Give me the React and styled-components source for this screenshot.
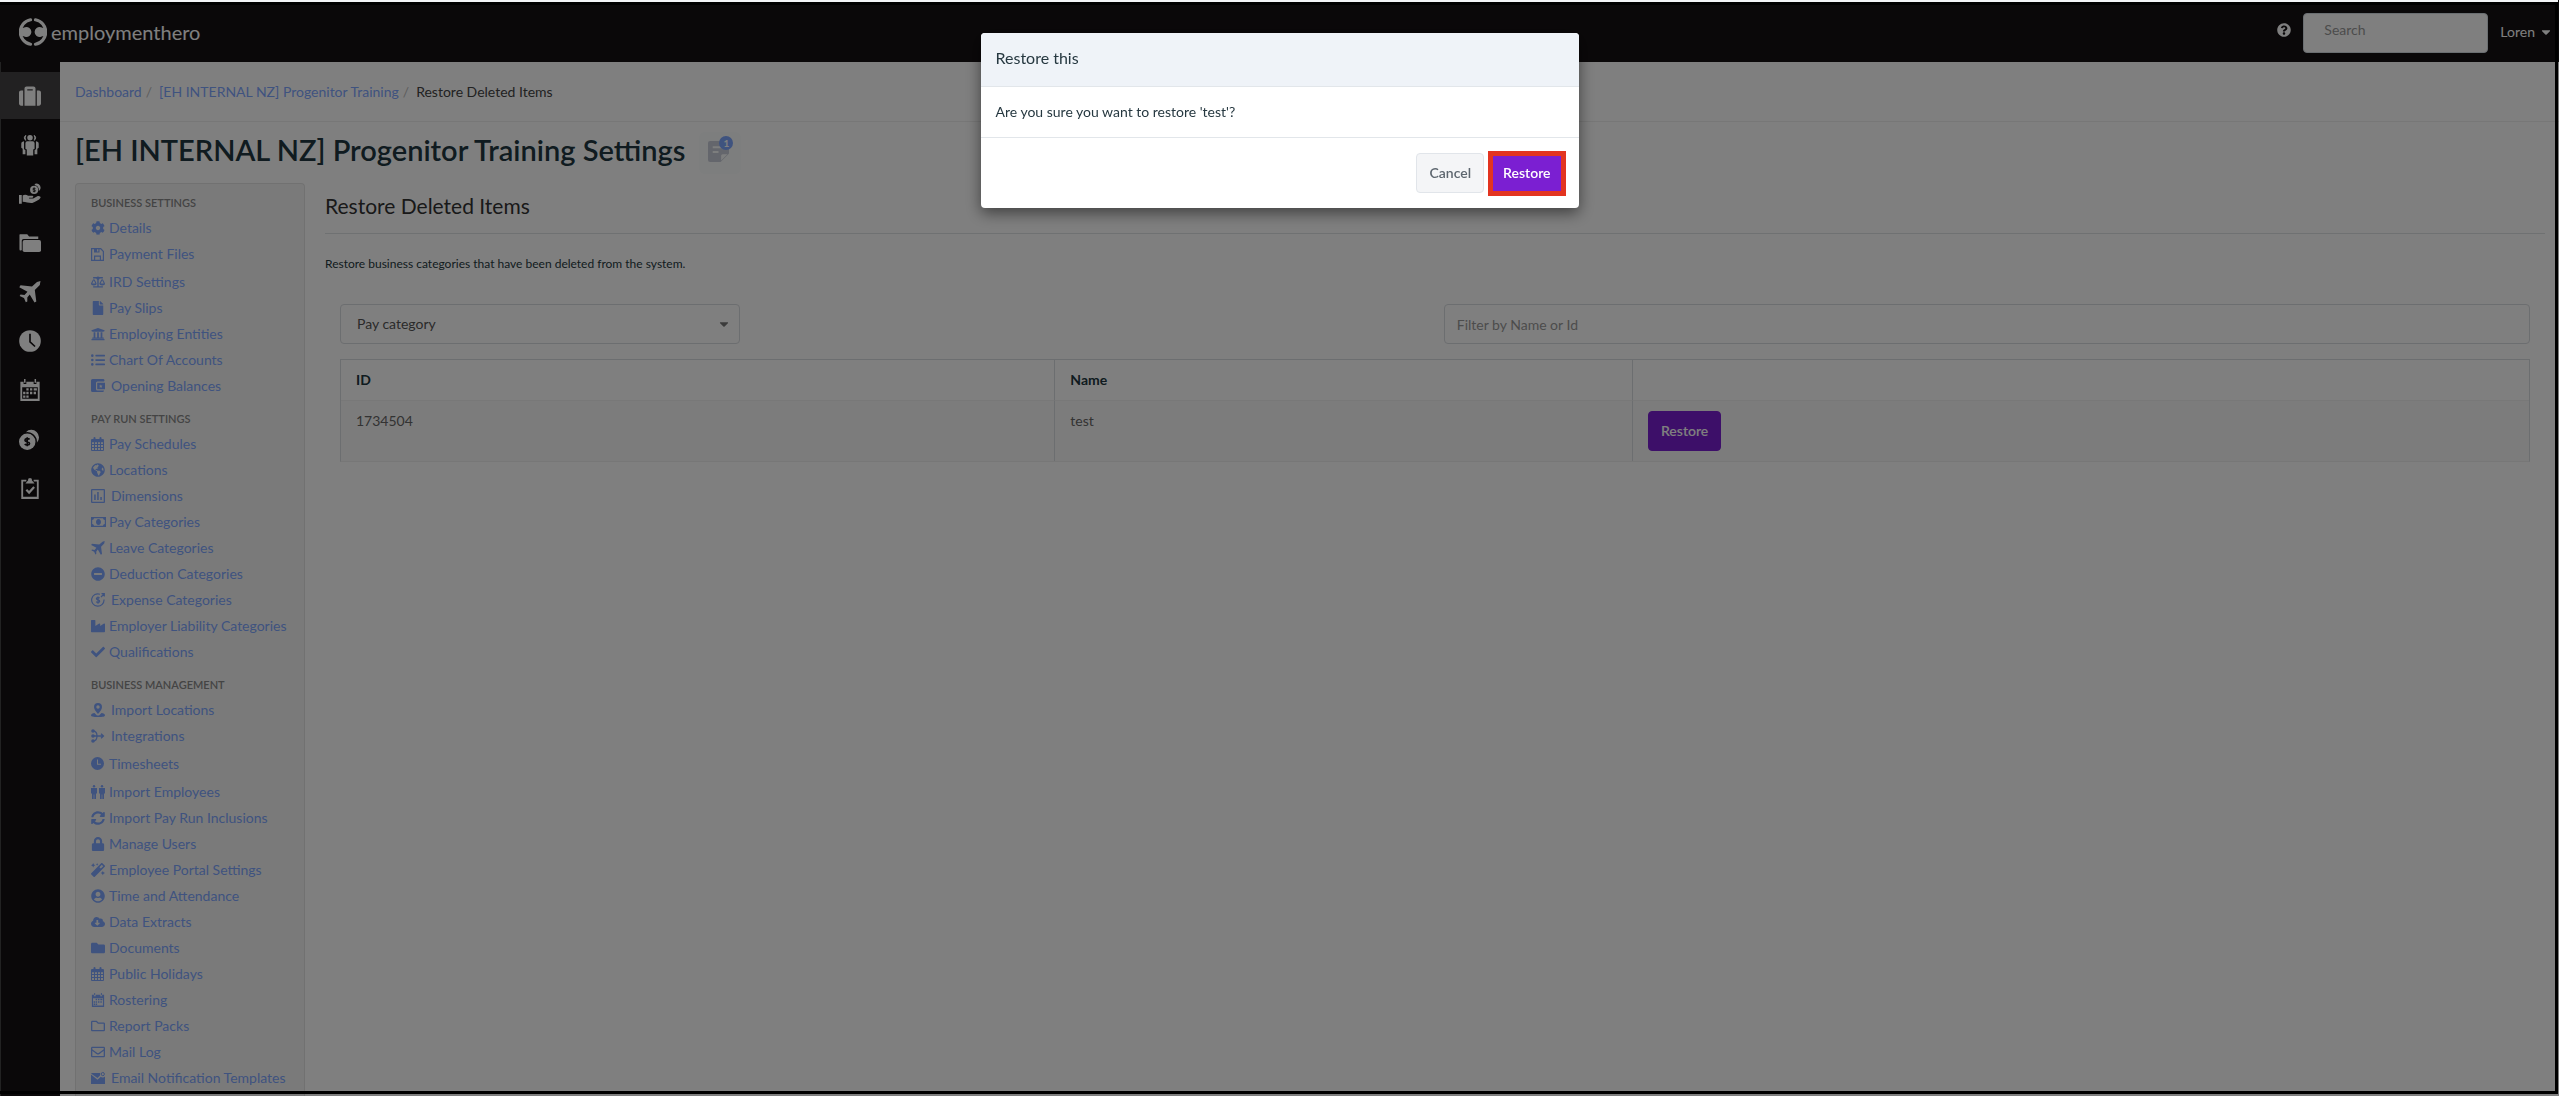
import React, { useState } from 'react'
import styled, { createGlobalStyle } from 'styled-components'
import {
  FaBalanceScale, FaCaretDown, FaCheck, FaCloudDownloadAlt, FaCog, FaFile, FaFolder,
  FaGlobeAmericas, FaIndustry, FaListUl, FaLock, FaMagic, FaMinusCircle, FaQuestionCircle,
  FaRegEnvelope, FaRegFolder, FaSuitcase, FaSyncAlt, FaUniversity, FaUserCircle
} from 'react-icons/fa'

// Icons the packages do not have

const Svg = ({ children, w = 24, h = 24, ...rest }) => (
  <svg viewBox={`0 0 ${w} ${h}`} height="1em" width={`${w / h}em`} fill="currentColor" {...rest}>{children}</svg>
)

const PeopleIcon = () => (
  <Svg>
    <circle cx="12" cy="4" r="3" />
    <path d="M7.500 1.500a3 3 0 0 0 0 5.400A5 5 0 0 1 7.500 1.500zM16.500 1.500a3 3 0 0 1 0 5.400A5 5 0 0 0 16.500 1.500z" stroke="currentColor" />
    <path d="M9 8h6a2 2 0 0 1 2 2v6l-1.500 1v6.500H8.500V17L7 16v-6a2 2 0 0 1 2-2z" />
    <path d="M5.500 8C4 8 2.500 9 2.500 10.500V15l1.500 1v6h3v-4.500L5.500 16.500zM18.500 8C20 8 21.500 9 21.500 10.500V15L20 16v6h-3v-4.500l1.500-1z" />
  </Svg>
)

const HandCoinsIcon = () => (
  <Svg>
    <path d="M0 13h3v9.500H0zM4 13.500c2-1 4-1 6 .5h4.500c1.500 0 1.500 2 0 2H11v.8h4.500L20 14.500c1.500-.8 4 .3 3.500 1.500-1.500 2.500-6 4.500-9 5.800-3 .5-6.500-1.300-10.500-1.300z" />
    <path d="M17 1a4.500 4.500 0 0 1 6.500 4.500c0 1.500-1 2.700-2 3.300C22 5.500 20.500 3 17.500 2.500z" />
    <circle cx="16.500" cy="7.500" r="4.400" />
    <path d="M18 6.200c-.8-.8-3-.6-3 .4 0 1.300 3 .6 3 2 0 1-2.200 1.200-3 .2M16.500 5v5" stroke="#151113" fill="none" strokeWidth="1" />
  </Svg>
)

const FoldersIcon = () => (
  <Svg>
    <path d="M1 2.500h8l2 2.500h10v2.500H5a2 2 0 0 0-2 2V20H2.500A1.500 1.500 0 0 1 .5 18.500V3z" />
    <rect x="4" y="8.800" width="20" height="13" rx="2" />
  </Svg>
)

const PlaneIcon = () => (
  <Svg w={22} h={22}>
    <path d="M21.500 0L18 1l-5 4.500L1.500 4.200.3 6.200l8.200 4.600L5.500 14l-4-.5L.7 15 5 17l1.800 4.300 1.500-.8V16.500l2.400-3 4.800 8 1.800-1L15.800 9l5-5z" />
  </Svg>
)

const WatchIcon = () => (
  <Svg>
    <circle cx="12" cy="12" r="11.800" />
    <path d="M12 4v9l5.500 5" stroke="#151113" fill="none" strokeWidth="1.800" />
  </Svg>
)

const CalendarIcon = () => (
  <Svg>
    <path fillRule="evenodd" d="M2 3h3v2.500h3V3h8v2.500h3V3h3.500v21h-21V3zM3.500 9v12.500h17V9z" />
    <path d="M5.500 0h1.600v4H5.500zM17 0h1.600v4H17zM8 10h2.500v2.500H8zM12 10h2.500v2.500H12zM16 10h3.500v2.500H16zM4.500 14H7v2.500H4.500zM8 14h2.500v2.500H8zM12 14h2.500v2.500H12zM16 14h2.500v2.500H16zM4.500 18H7v2.500H4.500zM8 18h2.500v2.500H8z" />
  </Svg>
)

const CoinsIcon = () => (
  <Svg>
    <path d="M7.500 4.500A8.300 8.300 0 1 1 19.500 16 10.500 10.500 0 0 0 7.500 4.500z" />
    <circle cx="9" cy="15" r="9" />
    <path d="M11.500 12.500c-1-1.500-5-1.200-5 .8 0 2.200 5 1.200 5 3.600 0 2-4 2.200-5.200.5M9 10v10" stroke="#151113" fill="none" strokeWidth="1.800" />
  </Svg>
)

const ClipboardIcon = () => (
  <Svg>
    <path fillRule="evenodd" d="M2.500 3H8v2H4.500v16.500h15V5H16V3h5.500v21h-19z" />
    <path d="M12 1l2 1v1.500l3 3.500H7l3-3.500V2z" />
    <path d="M8 14l3 3 5.500-6" stroke="currentColor" fill="none" strokeWidth="2.400" />
  </Svg>
)

const FloppyIcon = () => (
  <Svg w={14} h={14}>
    <path fillRule="evenodd" d="M0 1h10l3 3.200V14H0zM1.200 2.200v10.600h10.600V4.800l-2.400-2.600z" />
    <path d="M3 1h5.500v4.500H3zM3 8.500h7V13H8.800V9.700H4.200V13H3z" />
    <path d="M6 2.200h1.400v2.200H6z" fill="#f5f5f5" />
  </Svg>
)

const WalletIcon = () => (
  <Svg w={14} h={14}>
    <path fillRule="evenodd" d="M1.500 0h11A1.500 1.500 0 0 1 13 2.500H6.500A1.500 1.500 0 0 0 5 4v6a1.500 1.500 0 0 0 1.500 1.500H13a1.500 1.500 0 0 1-1 1.500H1.500A1.500 1.500 0 0 1 0 11.500v-10A1.500 1.500 0 0 1 1.500 0zM6.200 3.700H14v6.600H6.200zM9.800 5.500L9.300 6.500l-1.300.3.9.8-.2 1.200 1.100-.6 1.100.6-.2-1.200.9-.8-1.300-.3z" />
  </Svg>
)

const GridCalendarIcon = () => (
  <Svg w={13} h={14}>
    <path fillRule="evenodd" d="M1 2h11a1 1 0 0 1 1 1v10a1 1 0 0 1-1 1H1a1 1 0 0 1-1-1V3a1 1 0 0 1 1-1zM1 5.200V7h2V5.200zM4 5.200V7h2V5.200zM7 5.200V7h2V5.200zM10 5.200V7h2V5.200zM1 8v2h2V8zM4 8v2h2V8zM7 8v2h2V8zM10 8v2h2V8zM1 11v2h2v-2zM4 11v2h2v-2zM7 11v2h2v-2zM10 11v2h2v-2z" />
    <rect x="2.500" y="0" width="2" height="4" rx="1" />
    <rect x="8.500" y="0" width="2" height="4" rx="1" />
  </Svg>
)

const ChartIcon = () => (
  <Svg w={14} h={14}>
    <path fillRule="evenodd" d="M1 0h12a1 1 0 0 1 1 1v12a1 1 0 0 1-1 1H1a1 1 0 0 1-1-1V1a1 1 0 0 1 1-1zM1.300 1.300v11.400h11.400V1.300z" />
    <path d="M3.200 5.500h1.500V11H3.200zM6.200 3h1.500v8H6.200zM9.300 8h1.500v3H9.300z" />
  </Svg>
)

const BanknoteIcon = () => (
  <Svg w={15} h={14}>
    <path fillRule="evenodd" d="M0 2h15v10H0zM3 3.200A2 2 0 0 1 1.200 5v4A2 2 0 0 1 3 10.800h9A2 2 0 0 1 13.800 9V5A2 2 0 0 1 12 3.200zM7.500 4c3.300 0 3.300 6 0 6s-3.300-6 0-6z" />
    <path d="M6.700 5.500h1.200v2.800h.7v.8H6.500v-.8H7V6.500h-.5z" />
  </Svg>
)

const ExpenseIcon = () => (
  <Svg w={14} h={14}>
    <path d="M9 1.200A6.200 6.200 0 1 0 13 6.500M10 4l3-3M10.500 .7H13.300V3.500" stroke="currentColor" fill="none" strokeWidth="1.200" />
    <path d="M8.700 5.200c-.8-1-3.300-.9-3.300.5 0 1.600 3.300.8 3.300 2.500 0 1.400-2.700 1.500-3.500.4M7 3.500v7.200" stroke="currentColor" fill="none" strokeWidth="1.200" />
  </Svg>
)

const PinIcon = () => (
  <Svg w={14} h={14}>
    <path fillRule="evenodd" d="M7 0a4 4 0 0 1 4 4c0 2.500-2 4.500-4 7-2-2.500-4-4.500-4-7a4 4 0 0 1 4-4zM7 2.300a1.700 1.700 0 1 0 0 3.400 1.700 1.700 0 0 0 0-3.400z" />
    <path d="M3.500 10L6 12.500h2l2.500-2.500c2 .3 3.500 1 3.500 2.200C14 13.500 12 14 7 14s-7-.5-7-1.800c0-1.200 1.500-1.900 3.500-2.200z" />
  </Svg>
)

const MergeIcon = () => (
  <Svg w={14} h={14}>
    <circle cx="2" cy="2" r="1.800" />
    <circle cx="2" cy="7" r="1.800" />
    <circle cx="2" cy="12" r="1.800" />
    <path d="M2 2c3 0 4 2 4 5s-1 5-4 5M2 7h10M10 4.800L12.500 7 10 9.200" stroke="currentColor" fill="none" strokeWidth="1.300" />
  </Svg>
)

const ClockIcon = () => (
  <Svg w={13} h={14}>
    <path fillRule="evenodd" d="M6.500 0a6.500 6.500 0 1 1 0 13 6.500 6.500 0 0 1 0-13zM6 2.500v5.200h4v-1H7V2.500z" />
  </Svg>
)

const PairIcon = () => (
  <Svg w={14} h={14}>
    <circle cx="3" cy="1.200" r="1.200" />
    <circle cx="11" cy="1.200" r="1.200" />
    <path d="M0 3h6v5.500H5V14H3.300V9.500h-.6V14H1V8.500H0zM8 3h6v5.500h-1V14h-1.700V9.500h-.6V14H9V8.500H8z" />
  </Svg>
)

const MailBadgeIcon = () => (
  <Svg w={14} h={14}>
    <path d="M0 3.500l6.500 5.200 3.300-3C10.500 6.500 12.500 7 14 5.500V13H0zM1 2h8.300c-.3 1 0 2-.3 2.500L6.500 7 0 2.500z" />
    <path d="M11.800 1.500a1.600 1.600 0 1 1 0 3.200 1.600 1.600 0 0 1 0-3.200z" stroke="currentColor" fill="none" />
  </Svg>
)

const NoteIcon = () => (
  <Svg w={20} h={20}>
    <path fillRule="evenodd" d="M2 0h16a2 2 0 0 1 2 2v10l-8 8H2a2 2 0 0 1-2-2V2a2 2 0 0 1 2-2zM4.500 5v2H15V5zM4.500 9.500v2H10v-2z" />
    <path d="M12.500 18.500v-4.500a1.500 1.500 0 0 1 1.500-1.500h4.500z" fill="#fbfdfd" />
  </Svg>
)

const LogoMark = () => (
  <svg viewBox="0 0 28 28" width="28" height="28">
    <g fill="none" stroke="#fff" strokeWidth="3.200" strokeLinecap="round">
      <path d="M11.500 1.800A12.400 12.400 0 0 0 11.500 26.200" />
      <path d="M16.500 1.800A12.400 12.400 0 0 1 16.500 26.200" />
    </g>
    <g fill="#fff">
      <path d="M1 9c1.500 1.500 3 1 5 .2A5 5 0 1 1 6 18.800C4 18 2.500 17.500 1 19zM27 9c-1.500 1.500-3 1-5 .2A5 5 0 1 0 22 18.800c2-.8 3.500-1.300 5 .2z" />
    </g>
  </svg>
)

const railItems = [
  { label: 'Business', icon: <FaSuitcase />, active: true },
  { label: 'Employees', icon: <PeopleIcon /> },
  { label: 'Pay Runs', icon: <HandCoinsIcon /> },
  { label: 'Reports', icon: <FoldersIcon /> },
  { label: 'Leave', icon: <PlaneIcon /> },
  { label: 'Timesheets', icon: <WatchIcon /> },
  { label: 'Rostering', icon: <CalendarIcon /> },
  { label: 'Expenses', icon: <CoinsIcon /> },
  { label: 'Qualifications', icon: <ClipboardIcon /> }
]

const menu = [
  {
    title: 'BUSINESS SETTINGS',
    items: [
      { label: 'Details', icon: <FaCog /> },
      { label: 'Payment Files', icon: <FloppyIcon /> },
      { label: 'IRD Settings', icon: <FaBalanceScale />, tall: true },
      { label: 'Pay Slips', icon: <FaFile /> },
      { label: 'Employing Entities', icon: <FaUniversity /> },
      { label: 'Chart Of Accounts', icon: <FaListUl /> },
      { label: 'Opening Balances', icon: <WalletIcon />, wide: true }
    ]
  },
  {
    title: 'PAY RUN SETTINGS',
    items: [
      { label: 'Pay Schedules', icon: <GridCalendarIcon /> },
      { label: 'Locations', icon: <FaGlobeAmericas /> },
      { label: 'Dimensions', icon: <ChartIcon />, wide: true },
      { label: 'Pay Categories', icon: <BanknoteIcon /> },
      { label: 'Leave Categories', icon: <PlaneIcon /> },
      { label: 'Deduction Categories', icon: <FaMinusCircle /> },
      { label: 'Expense Categories', icon: <ExpenseIcon />, wide: true },
      { label: 'Employer Liability Categories', icon: <FaIndustry /> },
      { label: 'Qualifications', icon: <FaCheck /> }
    ]
  },
  {
    title: 'BUSINESS MANAGEMENT',
    items: [
      { label: 'Import Locations', icon: <PinIcon />, wide: true },
      { label: 'Integrations', icon: <MergeIcon />, wide: true },
      { label: 'Timesheets', icon: <ClockIcon />, tall: true },
      { label: 'Import Employees', icon: <PairIcon />, tall: true },
      { label: 'Import Pay Run Inclusions', icon: <FaSyncAlt /> },
      { label: 'Manage Users', icon: <FaLock /> },
      { label: 'Employee Portal Settings', icon: <FaMagic /> },
      { label: 'Time and Attendance', icon: <FaUserCircle /> },
      { label: 'Data Extracts', icon: <FaCloudDownloadAlt /> },
      { label: 'Documents', icon: <FaFolder /> },
      { label: 'Public Holidays', icon: <GridCalendarIcon /> },
      { label: 'Rostering', icon: <CalendarIcon /> },
      { label: 'Report Packs', icon: <FaRegFolder /> },
      { label: 'Mail Log', icon: <FaRegEnvelope /> },
      { label: 'Email Notification Templates', icon: <MailBadgeIcon />, wide: true }
    ]
  }
]

const rows = [{ id: '1734504', name: 'test' }]

function App() {
  const [filter, setFilter] = useState('')
  const [open, setOpen] = useState(true)

  return (
    <>
      <GlobalStyle />
      <Page>
        <TopBar>
          <Logo href="#"><LogoMark />employmenthero</Logo>
          <HelpLink href="#" aria-label="Help"><FaQuestionCircle /></HelpLink>
          <SearchInput type="search" placeholder="Search" aria-label="Search" />
          <UserButton type="button">Loren <FaCaretDown /></UserButton>
        </TopBar>
        <Body>
          <Rail>
            {railItems.map(item =>
              <RailLink key={item.label} href="#" aria-label={item.label} $active={item.active}>{item.icon}</RailLink>)}
          </Rail>
          <Main>
            <Breadcrumbs aria-label="Breadcrumb">
              <CrumbLink href="#">Dashboard</CrumbLink>
              <Slash>/</Slash>
              <CrumbLink href="#">[EH INTERNAL NZ] Progenitor Training</CrumbLink>
              <Slash>/</Slash>
              <span>Restore Deleted Items</span>
            </Breadcrumbs>
            <TitleRow>
              <Title>[EH INTERNAL NZ] Progenitor Training Settings</Title>
              <NotesButton type="button" aria-label="Notes">
                <NoteIcon />
                <Badge>1</Badge>
              </NotesButton>
            </TitleRow>
            <Columns>
              <Menu>
                {menu.map(group =>
                  <React.Fragment key={group.title}>
                    <MenuTitle>{group.title}</MenuTitle>
                    <MenuList>
                      {group.items.map(item =>
                        <MenuItem key={item.label} $tall={item.tall}>
                          <MenuLink href="#">
                            <MenuIcon $wide={item.wide}>{item.icon}</MenuIcon>
                            {item.label}
                          </MenuLink>
                        </MenuItem>)}
                    </MenuList>
                  </React.Fragment>)}
              </Menu>
              <Content>
                <SectionTitle>Restore Deleted Items</SectionTitle>
                <Intro>Restore business categories that have been deleted from the system.</Intro>
                <Listing>
                  <Filters>
                    <SelectBox>
                      <Select aria-label="Item type">
                        <option>Pay category</option>
                      </Select>
                      <FaCaretDown />
                    </SelectBox>
                    <FilterInput
                      type="text"
                      placeholder="Filter by Name or Id"
                      aria-label="Filter by Name or Id"
                      value={filter}
                      onChange={e => setFilter(e.target.value)}
                    />
                  </Filters>
                  <Table>
                    <thead>
                      <tr>
                        <HeadCell $width="32.6%">ID</HeadCell>
                        <HeadCell $width="26.4%">Name</HeadCell>
                        <HeadCell />
                      </tr>
                    </thead>
                    <tbody>
                      {rows.filter(row => (row.id + row.name).includes(filter)).map(row =>
                        <tr key={row.id}>
                          <Cell>{row.id}</Cell>
                          <Cell>{row.name}</Cell>
                          <Cell><Button type="button" $primary onClick={() => setOpen(true)}>Restore</Button></Cell>
                        </tr>)}
                    </tbody>
                  </Table>
                </Listing>
              </Content>
            </Columns>
          </Main>
        </Body>
      </Page>
      {open &&
        <Backdrop>
          <Dialog role="dialog" aria-modal="true" aria-labelledby="dialog-title">
            <DialogTitle id="dialog-title">Restore this</DialogTitle>
            <DialogBody>Are you sure you want to restore 'test'?</DialogBody>
            <DialogFooter>
              <Button type="button" onClick={() => setOpen(false)}>Cancel</Button>
              <MarkedButton type="button" $primary onClick={() => setOpen(false)}>Restore</MarkedButton>
            </DialogFooter>
          </Dialog>
        </Backdrop>}
      <Frame />
    </>
  )
}

const GlobalStyle = createGlobalStyle`
  * {
    box-sizing: border-box;
  }
  body {
    margin: 0;
    background: #fff;
    color: #263840;
    font-family: Lato, "Liberation Sans", sans-serif;
    font-size: 14px;
    line-height: 20px;
  }
  a {
    text-decoration: none;
  }
  button, input, select {
    font: inherit;
  }
`

const Page = styled.div`
  display: flex;
  flex-direction: column;
  min-height: 100vh;
`

const TopBar = styled.header`
  display: flex;
  align-items: center;
  height: 62px;
  padding: 4px 6px 0 19px;
  background: #151113;
  color: #fff;
`

const Logo = styled.a`
  display: flex;
  align-items: center;
  gap: 4px;
  margin-right: auto;
  padding-bottom: 3px;
  color: #fff;
  font-size: 20px;
`

const HelpLink = styled.a`
  display: flex;
  margin-right: 12px;
  padding-bottom: 6px;
  color: #fff;
`

const SearchInput = styled.input`
  width: 185px;
  height: 40px;
  padding: 0 20px 8px;
  border: 1px solid #d5dde2;
  border-radius: 4px;
  background: #fff;
  &::placeholder {
    color: #999;
  }
`

const UserButton = styled.button`
  display: flex;
  align-items: center;
  gap: 4px;
  margin-left: 12px;
  padding: 0 0 3px;
  border: 0;
  background: none;
  color: #fff;
`

const Body = styled.div`
  display: flex;
  flex: 1;
`

const Rail = styled.nav`
  display: flex;
  flex-direction: column;
  gap: 2px;
  width: 60px;
  padding-top: 10px;
  box-shadow: inset 1px 0 0 #444;
  background: #151113;
`

const RailLink = styled.a`
  display: flex;
  align-items: center;
  justify-content: center;
  height: 47px;
  background: ${({ $active }) => $active ? '#454244' : 'none'};
  color: #fff;
  font-size: 22px;
`

const Main = styled.main`
  flex: 1;
  display: flex;
  flex-direction: column;
`

const Breadcrumbs = styled.nav`
  display: flex;
  align-items: center;
  height: 60px;
  padding: 0 15px;
  border-bottom: 1px solid #eee;
  color: #444;
`

const CrumbLink = styled.a`
  color: #7ea6ff;
`

const Slash = styled.span`
  padding: 0 7px 0 4px;
  color: #bbb;
`

const TitleRow = styled.div`
  display: flex;
  align-items: flex-start;
  gap: 14px;
  padding: 10px 15px 9px;
`

const Title = styled.h1`
  margin: 0;
  color: #203640;
  font-size: 29px;
  font-weight: 600;
  line-height: 36px;
`

const NotesButton = styled.button`
  position: relative;
  display: flex;
  align-items: center;
  justify-content: center;
  width: 42px;
  height: 42px;
  padding: 0 4px 4px 0;
  border: 0;
  border-radius: 6px;
  background: #fafdfc;
  color: #c9ccd8;
  font-size: 21px;
`

const Badge = styled.span`
  position: absolute;
  top: 4px;
  right: 8px;
  width: 14px;
  height: 14px;
  border-radius: 7px;
  background: #7ea6ff;
  color: #fff;
  font-size: 10px;
  font-weight: bold;
  line-height: 14px;
`

const Columns = styled.div`
  display: flex;
  flex: 1;
  gap: 20px;
  padding: 0 14px 0 15px;
`

const Menu = styled.aside`
  width: 230px;
  padding: 0 15px 4px;
  border: 1px solid #e3e3e3;
  border-bottom: 0;
  border-radius: 4px 4px 0 0;
  background: #f5f5f5;
`

const MenuTitle = styled.h2`
  margin: 0;
  padding: 12px 0 4px;
  color: #888;
  font-size: 11px;
  font-weight: 600;
  line-height: 16px;
  &:first-child {
    padding-top: 11px;
  }
`

const MenuList = styled.ul`
  margin: 0;
  padding: 0;
  list-style: none;
`

const MenuItem = styled.li`
  padding-top: ${({ $tall }) => $tall ? '2px' : '0'};
`

const MenuLink = styled.a`
  display: flex;
  align-items: center;
  height: 26px;
  color: #7ea6ff;
  white-space: nowrap;
`

const MenuIcon = styled.span`
  display: flex;
  width: ${({ $wide }) => $wide ? '20px' : '18px'};
`

const Content = styled.section`
  flex: 1;
`

const SectionTitle = styled.h2`
  margin: 0 0 20px;
  padding: 10px 0 14px;
  border-bottom: 1px solid #dfe2e4;
  color: #333;
  font-size: 21px;
  font-weight: normal;
  line-height: 26px;
`

const Intro = styled.p`
  margin: 0 0 30px;
  font-size: 12px;
`

const Listing = styled.div`
  padding: 0 15px;
`

const Filters = styled.div`
  display: flex;
  justify-content: space-between;
  margin-bottom: 15px;
`

const SelectBox = styled.div`
  display: flex;
  align-items: center;
  width: 400px;
  height: 40px;
  padding: 0 8px 0 16px;
  border: 1px solid #d8dce0;
  border-radius: 4px;
  color: #777;
`

const Select = styled.select`
  flex: 1;
  appearance: none;
  padding: 0;
  border: 0;
  background: none;
  color: #555;
`

const FilterInput = styled.input`
  width: 49.6%;
  height: 40px;
  padding: 0 12px;
  border: 1px solid #d8dce0;
  border-radius: 4px;
  &::placeholder {
    color: #999;
  }
`

const Table = styled.table`
  width: 100%;
  border: 1px solid #d8dce0;
  border-bottom-color: #eee;
  border-spacing: 0;
  table-layout: fixed;
`

const HeadCell = styled.th`
  width: ${({ $width }) => $width || 'auto'};
  height: 41px;
  padding: 0 15px;
  border-bottom: 1px solid #f0f0f0;
  color: #203640;
  text-align: left;
  & + & {
    border-left: 1px solid #d8dce0;
  }
`

const Cell = styled.td`
  padding: 10px 15px;
  background: #f9f9f9;
  color: #666;
  vertical-align: top;
  & + & {
    border-left: 1px solid #d8dce0;
  }
`

const Button = styled.button`
  height: 40px;
  padding: 0 12px;
  border: 1px solid ${({ $primary }) => $primary ? '#7b1fd2' : '#e1e5ea'};
  border-radius: 4px;
  background: ${({ $primary }) => $primary ? '#7b1fd2' : '#f4f5f7'};
  color: ${({ $primary }) => $primary ? '#fff' : '#5d666f'};
  font-weight: 600;
`

const MarkedButton = styled(Button)`
  height: 45px;
  padding: 0 10px;
  border: 5px solid #e33420;
  border-radius: 0;
`

const Backdrop = styled.div`
  position: fixed;
  inset: 0;
  display: flex;
  align-items: flex-start;
  justify-content: center;
  padding-top: 33px;
  background: rgba(0, 0, 0, 0.5);
`

const Dialog = styled.div`
  width: 598px;
  border-radius: 4px;
  background: #fff;
  box-shadow: 0 5px 15px rgba(0, 0, 0, 0.5);
  overflow: hidden;
`

const DialogTitle = styled.h2`
  margin: 0;
  padding: 15px 15px 18px;
  border-bottom: 1px solid #e2e6ea;
  background: #eff3f8;
  font-size: 16px;
  font-weight: normal;
  line-height: 20px;
`

const DialogBody = styled.p`
  margin: 0;
  padding: 15px;
  border-bottom: 1px solid #e2e6ea;
`

const DialogFooter = styled.div`
  display: flex;
  align-items: center;
  justify-content: flex-end;
  gap: 4px;
  height: 70px;
  padding: 0 13px;
`

const Frame = styled.div`
  position: fixed;
  inset: 2px 1px 2px 0;
  border: 3px solid #000;
  border-left: 0;
  box-shadow: 0 -2px 0 #f2f4f6;
  pointer-events: none;
`

export default App
